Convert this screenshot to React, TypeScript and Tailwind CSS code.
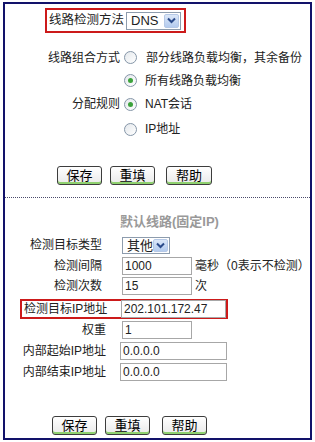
import React from "react";

const font = { fontFamily: '"Liberation Sans", "Noto Sans CJK SC", sans-serif' };

function Chevron() {
  return (
    <svg width="9" height="7" viewBox="0 0 9 7">
      <path d="M1 1.5 L4.5 5 L8 1.5" fill="none" stroke="#2a4a8a" strokeWidth="2" />
    </svg>
  );
}

function Select({ value, w, h, pl }: { value: string; w: string; h: string; pl: string }) {
  return (
    <div className={`flex shrink-0 items-center justify-between border border-[#8d9cad] bg-white ${w} ${h}`}>
      <span className={`${pl} text-[13px] leading-none text-[#222]`}>{value}</span>
      <div className="mr-[1px] flex h-[calc(100%-2px)] w-[15px] items-center justify-center rounded-[2px] border border-[#b5c8e6] bg-gradient-to-b from-[#dbe7f8] to-[#b4cbee]">
        <Chevron />
      </div>
    </div>
  );
}

function Radio({ checked }: { checked?: boolean }) {
  return (
    <div className="flex h-[13px] w-[13px] shrink-0 items-center justify-center rounded-full border border-[#8596a8] bg-gradient-to-br from-[#e4e8ec] to-white">
      {checked && <div className="h-[5px] w-[5px] rounded-full bg-[#3ca23c]" />}
    </div>
  );
}

function Btn({ label, w }: { label: string; w: string }) {
  return (
    <div className={`flex h-[19px] ${w} items-center justify-center rounded-[3px] border border-[#3d3d3d] bg-gradient-to-b from-white to-[#e9e9e9] shadow-[inset_0_-2px_0_#8fd16f] text-[13px] leading-none text-black`}>
      {label}
    </div>
  );
}

function Input({ value, w }: { value: string; w: string }) {
  return (
    <div className={`flex h-[18px] shrink-0 ${w} items-center border border-[#a7a7a7] bg-white pl-[2px] text-[12px] leading-none text-[#222]`}>
      {value}
    </div>
  );
}

export default function App() {
  return (
    <div className="h-[442px] w-[315px] whitespace-nowrap bg-white pl-[3px] pt-[2px] text-[12px] text-[#222]" style={font}>
      <div className="flex h-[438px] w-[309px] flex-col border-2 border-[#12126a]">
        {/* row 1 */}
        <div className="ml-[40px] mt-[4px] flex h-[25px] w-[141px] items-center border-2 border-[#cc1a1a]">
          <span className="ml-[2px] w-[77px] shrink-0 text-[12.5px] leading-none">线路检测方法</span>
          <Select value="DNS" w="w-[55px]" h="h-[18px]" pl="pl-[4px]" />
        </div>

        {/* radios */}
        <div className="mt-[13px] flex h-[23px] items-center">
          <span className="w-[115px] shrink-0 text-right">线路组合方式</span>
          <div className="ml-[4px]"><Radio /></div>
          <span className="ml-[9px]">部分线路负载均衡，其余备份</span>
        </div>
        <div className="flex h-[23px] items-center">
          <div className="ml-[119px]"><Radio checked /></div>
          <span className="ml-[8px]">所有线路负载均衡</span>
        </div>
        <div className="flex h-[24px] items-center">
          <span className="w-[115px] shrink-0 text-right">分配规则</span>
          <div className="ml-[4px]"><Radio checked /></div>
          <span className="ml-[8px]">NAT会话</span>
        </div>
        <div className="flex h-[26px] items-center">
          <div className="ml-[119px]"><Radio /></div>
          <span className="ml-[8px]">IP地址</span>
        </div>

        {/* buttons */}
        <div className="ml-[52px] mt-[24px] flex">
          <Btn label="保存" w="w-[45px]" />
          <div className="ml-[8px]"><Btn label="重填" w="w-[45px]" /></div>
          <div className="ml-[11px]"><Btn label="帮助" w="w-[46px]" /></div>
        </div>

        <div className="mt-[12px] border-t border-dotted border-[#4a4a6a]" />

        <div className="ml-[115px] mt-[16px] h-[16px] text-[13px] font-bold leading-[16px] text-[#999]">默认线路(固定IP)</div>

        {/* lower form */}
        <div className="mt-[5px] flex h-[20px] items-center">
          <span className="w-[97px] shrink-0 text-right">检测目标类型</span>
          <div className="ml-[20px]"><Select value="其他" w="w-[48px]" h="h-[17px]" pl="pl-[4px]" /></div>
        </div>
        <div className="flex h-[21px] items-center">
          <span className="w-[97px] shrink-0 text-right">检测间隔</span>
          <div className="ml-[20px]"><Input value="1000" w="w-[70px]" /></div>
          <span className="ml-[3px]">毫秒（0表示不检测）</span>
        </div>
        <div className="flex h-[20px] items-center">
          <span className="w-[97px] shrink-0 text-right">检测次数</span>
          <div className="ml-[20px]"><Input value="15" w="w-[70px]" /></div>
          <span className="ml-[3px]">次</span>
        </div>
        <div className="ml-[15px] mt-[3px] flex h-[20px] w-[208px] items-center border-2 border-[#cc1a1a]">
          <span className="ml-[2px] w-[84px] shrink-0">检测目标IP地址</span>
          <div className="ml-[13px]"><Input value="202.101.172.47" w="w-[105px]" /></div>
        </div>
        <div className="flex h-[21px] items-center">
          <span className="w-[101px] shrink-0 text-right">权重</span>
          <div className="ml-[16px]"><Input value="1" w="w-[70px]" /></div>
        </div>
        <div className="flex h-[21px] items-center">
          <span className="w-[101px] shrink-0 text-right">内部起始IP地址</span>
          <div className="ml-[14px]"><Input value="0.0.0.0" w="w-[107px]" /></div>
        </div>
        <div className="flex h-[21px] items-center">
          <span className="w-[101px] shrink-0 text-right">内部结束IP地址</span>
          <div className="ml-[14px]"><Input value="0.0.0.0" w="w-[107px]" /></div>
        </div>

        <div className="ml-[47px] mt-[34px] flex">
          <Btn label="保存" w="w-[45px]" />
          <div className="ml-[8px]"><Btn label="重填" w="w-[45px]" /></div>
          <div className="ml-[12px]"><Btn label="帮助" w="w-[45px]" /></div>
        </div>
      </div>
    </div>
  );
}
